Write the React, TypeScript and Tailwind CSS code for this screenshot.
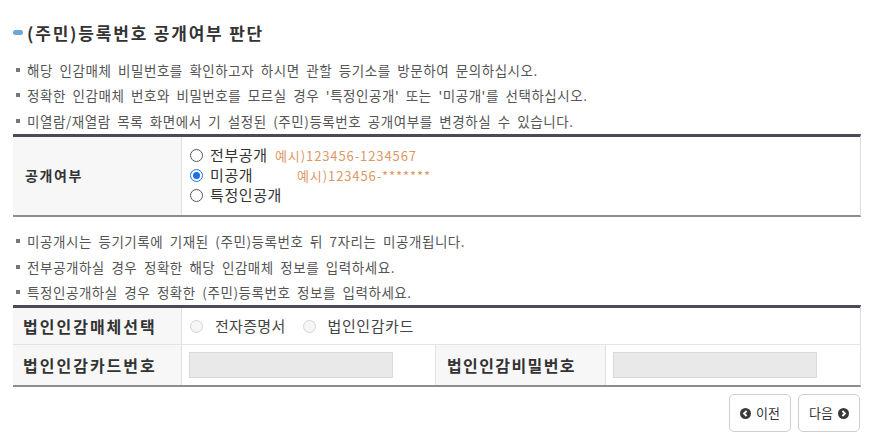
import React from "react";

const font = { fontFamily: '"Noto Sans CJK KR", "Noto Sans", sans-serif' };

function Bullet({ children }: { children: React.ReactNode }) {
  return (
    <li className="flex items-center h-[25.5px] text-[13.5px] text-[#555] [word-spacing:3px]">
      <span className="w-[4px] h-[4px] bg-[#777] ml-[3px] mr-[7px] shrink-0" />
      <span className="tracking-[0.55px]">{children}</span>
    </li>
  );
}

function CircleArrow({ dir }: { dir: "left" | "right" }) {
  return (
    <svg width="11" height="11" viewBox="0 0 11 11">
      <circle cx="5.5" cy="5.5" r="5.5" fill="#3a3a3a" />
      {dir === "left" ? (
        <path d="M6.6 3 L4 5.5 L6.6 8" stroke="#fff" strokeWidth="1.8" fill="none" />
      ) : (
        <path d="M4.4 3 L7 5.5 L4.4 8" stroke="#fff" strokeWidth="1.8" fill="none" />
      )}
    </svg>
  );
}

function Radio({ checked, disabled }: { checked?: boolean; disabled?: boolean }) {
  if (checked) {
    return (
      <span className="w-[13px] h-[13px] rounded-full border border-[#1a73e8] flex items-center justify-center bg-white shrink-0">
        <span className="w-[7px] h-[7px] rounded-full bg-[#1a73e8]" />
      </span>
    );
  }
  return (
    <span
      className={`w-[13px] h-[13px] rounded-full border shrink-0 ${
        disabled ? "border-[#d4d4d4] bg-[#f6f6f6]" : "border-[#555] bg-white"
      }`}
    />
  );
}

export default function App() {
  return (
    <div className="w-[879px] h-[440px] bg-white overflow-hidden" style={font}>
      <div className="ml-[13px] w-[848px] pt-[20px]">
        <h2 className="flex items-center h-[25px] text-[17px] font-bold text-[#333] tracking-[1.8px]">
          <span className="w-[10px] h-[5px] rounded-full bg-[#6aa6d9] mr-[4px]" />
          (주민)등록번호 공개여부 판단
        </h2>

        <ul className="mt-[12px]">
          <Bullet>해당 인감매체 비밀번호를 확인하고자 하시면 관할 등기소를 방문하여 문의하십시오.</Bullet>
          <Bullet>정확한 인감매체 번호와 비밀번호를 모르실 경우 '특정인공개' 또는 '미공개'를 선택하십시오.</Bullet>
          <Bullet>미열람/재열람 목록 화면에서 기 설정된 (주민)등록번호 공개여부를 변경하실 수 있습니다.</Bullet>
        </ul>

        <div className="border-t-[3px] border-t-[#4b4b57] border-b-2 border-b-[#8d8d8d] border-r border-r-[#dedede] flex h-[83px]">
          <div className="w-[169px] bg-[#f7f7f7] border-r border-[#e3e3e3] flex items-center pl-[12px] text-[14px] font-bold text-[#333] tracking-[1.6px]">
            공개여부
          </div>
          <div className="flex flex-col justify-center pl-[8px] text-[15px] text-[#333]">
            <label className="flex items-center h-[20px]">
              <Radio />
              <span className="ml-[7px] w-[65px] tracking-[0.6px]">전부공개</span>
              <span className="text-[13px] tracking-[0.9px] text-[#dc9866]">예시)123456-1234567</span>
            </label>
            <label className="flex items-center h-[20px]">
              <Radio checked />
              <span className="ml-[7px] w-[87px] tracking-[0.6px]">미공개</span>
              <span className="text-[13px] tracking-[0.9px] text-[#dc9866]">예시)123456-*******</span>
            </label>
            <label className="flex items-center h-[20px]">
              <Radio />
              <span className="ml-[7px] tracking-[0.6px]">특정인공개</span>
            </label>
          </div>
        </div>

        <ul className="mt-[12px]">
          <Bullet>미공개시는 등기기록에 기재된 (주민)등록번호 뒤 7자리는 미공개됩니다.</Bullet>
          <Bullet>전부공개하실 경우 정확한 해당 인감매체 정보를 입력하세요.</Bullet>
          <Bullet>특정인공개하실 경우 정확한 (주민)등록번호 정보를 입력하세요.</Bullet>
        </ul>

        <div className="border-t-[3px] border-t-[#4b4b57] border-b-2 border-b-[#8d8d8d] border-r border-r-[#dedede] text-[#333]">
          <div className="flex h-[37px] border-b border-[#e3e3e3]">
            <div className="w-[169px] bg-[#f7f7f7] border-r border-[#e3e3e3] flex items-center pl-[10px] text-[16px] font-bold tracking-[2px]">
              법인인감매체선택
            </div>
            <div className="flex items-center pl-[8px] text-[15px] text-[#444]">
              <Radio disabled />
              <span className="ml-[12px] mr-[17px] tracking-[0.3px]">전자증명서</span>
              <Radio disabled />
              <span className="ml-[12px] tracking-[0.6px]">법인인감카드</span>
            </div>
          </div>
          <div className="flex h-[40px]">
            <div className="w-[169px] bg-[#f7f7f7] border-r border-[#e3e3e3] flex items-center pl-[10px] text-[16px] font-bold tracking-[2px]">
              법인인감카드번호
            </div>
            <div className="w-[254px] flex items-center pl-[7px] border-r border-[#e3e3e3]">
              <div className="w-[204px] h-[26px] bg-[#e9e9e9] border border-[#d9d9d9]" />
            </div>
            <div className="w-[170px] bg-[#f7f7f7] border-r border-[#e3e3e3] flex items-center pl-[11px] text-[16px] font-bold tracking-[1.4px]">
              법인인감비밀번호
            </div>
            <div className="flex items-center pl-[7px]">
              <div className="w-[204px] h-[26px] bg-[#e9e9e9] border border-[#d9d9d9]" />
            </div>
          </div>
        </div>

        <div className="flex justify-end gap-[7px] mt-[7px] pr-[1px]">
          <button className="w-[62px] h-[38px] rounded-[5px] border border-[#cfcfcf] bg-white flex items-center justify-center gap-[5px] text-[13px] text-[#333]">
            <CircleArrow dir="left" />
            이전
          </button>
          <button className="w-[62px] h-[38px] rounded-[5px] border border-[#cfcfcf] bg-white flex items-center justify-center gap-[5px] text-[13px] text-[#333]">
            다음
            <CircleArrow dir="right" />
          </button>
        </div>
      </div>
    </div>
  );
}
